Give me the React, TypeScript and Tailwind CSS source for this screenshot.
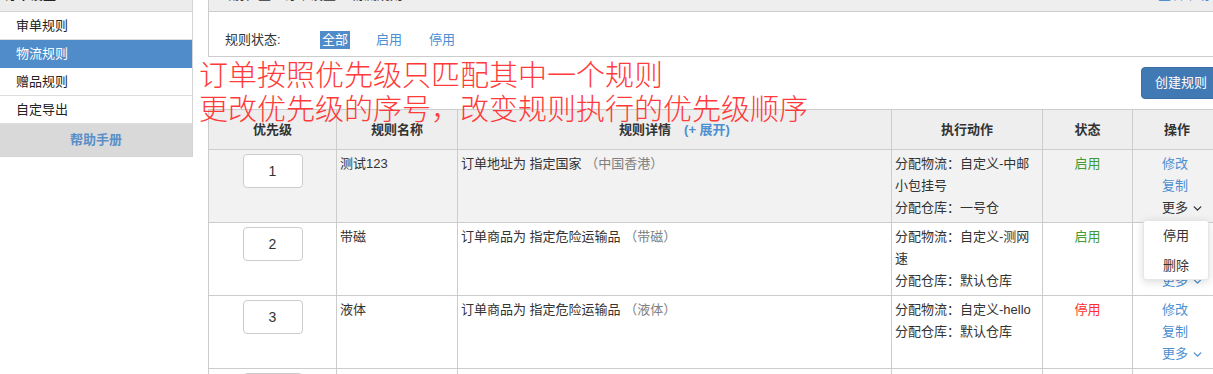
import { ChevronDown } from 'lucide-react'

const font = { fontFamily: '"Liberation Sans", "Noto Sans CJK SC", sans-serif' }

type Rule = {
  priority: number
  name: string
  cond: string
  target: string
  actions: string[]
  enabled: boolean
}

const rules: Rule[] = [
  { priority: 1, name: '测试123', cond: '订单地址为 指定国家', target: '（中国香港）', actions: ['分配物流：自定义-中邮小包挂号', '分配仓库：一号仓'], enabled: true },
  { priority: 2, name: '带磁', cond: '订单商品为 指定危险运输品', target: '（带磁）', actions: ['分配物流：自定义-测网速', '分配仓库：默认仓库'], enabled: true },
  { priority: 3, name: '液体', cond: '订单商品为 指定危险运输品', target: '（液体）', actions: ['分配物流：自定义-hello', '分配仓库：默认仓库'], enabled: false },
  { priority: 4, name: '粉末', cond: '订单商品为 指定危险运输品', target: '（粉末）', actions: ['分配物流：自定义-hello'], enabled: true },
]

const menu = ['审单规则', '物流规则', '赠品规则', '自定导出']

export default function App() {
  return (
    <div className="relative flex w-[1213px] h-[374px] overflow-hidden bg-white text-[13px] text-[#333]" style={font}>
      {/* Sidebar */}
      <aside className="w-[193px] shrink-0 self-start border-r border-b border-[#d4d4d4]">
        <div className="h-[12px] overflow-hidden bg-[#ececec] border-b border-[#d4d4d4]">
          <div className="-mt-[20px] h-[30px] flex items-center pl-[4px] font-bold text-[#222]">订单设置</div>
        </div>
        {menu.map((m) => (
          <div
            key={m}
            className={
              m === '物流规则'
                ? 'h-[28px] flex items-center pl-[16px] bg-[#4f8cc9] text-white border-b border-[#4f8cc9]'
                : 'h-[28px] flex items-center pl-[16px] text-[#222] border-b border-[#dddddd]'
            }
          >
            {m}
          </div>
        ))}
        <div className="h-[32px] flex items-center justify-center bg-[#d9d9d9] text-[#5a8fc8] font-bold">帮助手册</div>
      </aside>

      {/* Main */}
      <main className="ml-[15px] w-[1013px] shrink-0">
        <div className="border-l border-b border-[#cccccc]">
          <div className="h-[12px] overflow-hidden bg-[#eeeeee] border-b border-[#cccccc]">
            <div className="-mt-[20px] h-[30px] flex items-center justify-between pl-[10px] pr-[11px]">
              <span>当前位置：订单设置 &gt; 物流规则</span>
              <span className="text-[#4d8fd1]">查看帮助</span>
            </div>
          </div>
          <div className="h-[44px] pt-[19px] pl-[16px] flex items-start">
            <div className="flex items-center h-[18px]">
              <span className="w-[95px]">规则状态:</span>
              <span className="px-[2px] h-[18px] flex items-center bg-[#4f8cc9] text-white">全部</span>
              <span className="ml-[26px] text-[#4d8fd1]">启用</span>
              <span className="ml-[27px] text-[#4d8fd1]">停用</span>
            </div>
          </div>
        </div>

        <div className="h-[52px] pt-[10px] flex justify-end">
          <button className="h-[32px] px-[13px] rounded-[4px] bg-[#4079b4] border border-[#3a6fa6] text-white text-[13px]">
            创建规则
          </button>
        </div>

        <table className="w-full border-collapse table-fixed">
          <colgroup>
            <col className="w-[128px]" />
            <col className="w-[121px]" />
            <col className="w-[434px]" />
            <col className="w-[151px]" />
            <col className="w-[90px]" />
            <col className="w-[89px]" />
          </colgroup>
          <thead>
            <tr className="h-[40px] bg-[#eeeeee] font-bold">
              <th className="border border-[#cccccc] font-bold">优先级</th>
              <th className="border border-[#cccccc] font-bold">规则名称</th>
              <th className="border border-[#cccccc] font-bold">
                规则详情<span className="ml-[13px] text-[#4d8fd1]">(+ 展开)</span>
              </th>
              <th className="border border-[#cccccc] font-bold">执行动作</th>
              <th className="border border-[#cccccc] font-bold">状态</th>
              <th className="border border-[#cccccc] font-bold">操作</th>
            </tr>
          </thead>
          <tbody>
            {rules.map((r, i) => (
              <tr key={r.priority} className={i === 0 ? 'h-[73px] bg-[#f2f2f2]' : 'h-[73px] bg-white'}>
                <td className="border border-[#cccccc] align-top pt-[4px]">
                  <div className="mx-auto w-[60px] h-[34px] flex items-center justify-center bg-white border border-[#cccccc] rounded-[4px] text-[14px]">
                    {r.priority}
                  </div>
                </td>
                <td className="border border-[#cccccc] align-top px-[3px] pt-[3px] leading-[22px]">{r.name}</td>
                <td className="border border-[#cccccc] align-top px-[3px] pt-[3px] leading-[22px]">
                  {r.cond} <span className="text-[#808080]">{r.target}</span>
                </td>
                <td className="border border-[#cccccc] align-top px-[3px] pt-[3px] leading-[22px]">
                  {r.actions.map((a) => (
                    <div key={a}>{a}</div>
                  ))}
                </td>
                <td className="border border-[#cccccc] align-top text-center pt-[3px] leading-[22px]">
                  <span className={r.enabled ? 'text-[#3f9b35]' : 'text-[#ff2e2e]'}>{r.enabled ? '启用' : '停用'}</span>
                </td>
                <td className="relative border border-[#cccccc] align-top pl-[29px] pt-[3px] leading-[22px]">
                  <div className="text-[#4d8fd1]">修改</div>
                  <div className="text-[#4d8fd1]">复制</div>
                  <div className={i === 0 ? 'flex items-center gap-[3px] text-[#333]' : 'flex items-center gap-[3px] text-[#4d8fd1]'}>
                    更多
                    <ChevronDown size={13} strokeWidth={2.5} />
                  </div>
                  {i === 0 && (
                    <div className="absolute z-10 left-[10px] top-[70px] w-[66px] h-[60px] bg-white rounded-[3px] border border-[#e6e6e6] shadow-[0_2px_8px_rgba(0,0,0,0.15)]">
                      <div className="h-[30px] flex items-center pl-[19px] text-[#333]">停用</div>
                      <div className="h-[30px] flex items-center pl-[19px] text-[#333]">删除</div>
                    </div>
                  )}
                </td>
              </tr>
            ))}
          </tbody>
        </table>
      </main>

      {/* Annotation overlay */}
      <div
        className="absolute left-[199px] top-[56px] text-[29px] leading-[34px] font-light text-[#ff3b3b] pointer-events-none"
        style={{ fontFamily: '"Noto Sans CJK SC", sans-serif' }}
      >
        <div>订单按照优先级只匹配其中一个规则</div>
        <div>更改优先级的序号，改变规则执行的优先级顺序</div>
      </div>
    </div>
  )
}
